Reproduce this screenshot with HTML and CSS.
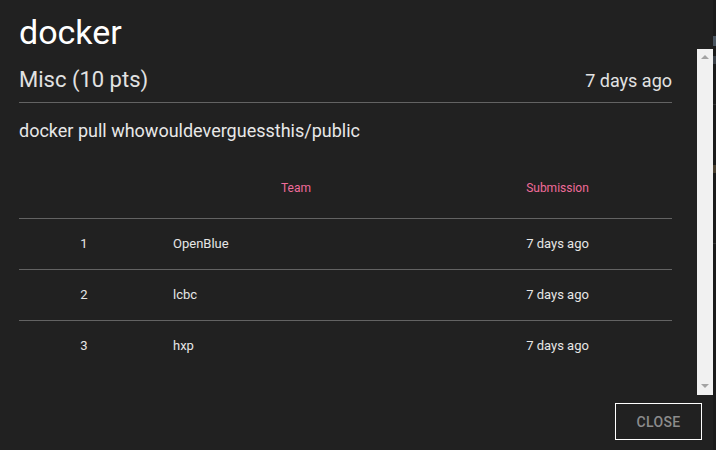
FILE: index.html
```html
<!DOCTYPE html>
<html>
<head>
<meta charset="utf-8">
<link rel="stylesheet" href="styles.css">
</head>
<body>
<div class="screen">
  <div class="dialog">
    <h1 class="title">docker</h1>
    <div class="body">
      <div class="content">
        <div class="meta">
          <span class="category">Misc (10 pts)</span>
          <span class="age">7 days ago</span>
        </div>
        <p class="desc">docker pull whowouldeverguessthis/public</p>
        <table class="solves">
          <colgroup>
            <col class="c-rank"><col class="c-team"><col class="c-sub">
          </colgroup>
          <thead>
            <tr><th></th><th>Team</th><th>Submission</th></tr>
          </thead>
          <tbody>
            <tr><td class="rank">1</td><td class="team">OpenBlue</td><td class="sub">7 days ago</td></tr>
            <tr><td class="rank">2</td><td class="team">lcbc</td><td class="sub">7 days ago</td></tr>
            <tr><td class="rank">3</td><td class="team">hxp</td><td class="sub">7 days ago</td></tr>
          </tbody>
        </table>
      </div>
      <div class="scrollbar">
        <span class="arrow up"></span>
        <span class="arrow down"></span>
      </div>
    </div>
    <div class="actions">
      <button class="close">Close</button>
    </div>
  </div>
  <div class="behind">
    <span class="mark m1"></span>
    <span class="mark m2"></span>
    <span class="mark m3"></span>
    <span class="mark m4"></span>
    <span class="mark m5"></span>
  </div>
</div>
</body>
</html>
```
FILE: styles.css
```css
* { box-sizing: border-box; }
html, body { margin: 0; padding: 0; background: #212121; }
body {
  font-family: Roboto, "Liberation Sans", Arial, sans-serif;
  color: rgba(255,255,255,0.87);
  width: 716px;
  height: 450px;
  overflow: hidden;
}
.screen { display: flex; width: 716px; height: 450px; }
.dialog {
  width: 713px;
  height: 450px;
  background: #212121;
  display: flex;
  flex-direction: column;
}
.title {
  margin: 0;
  padding: 15px 0 0 19px;
  height: 49px;
  font-size: 34px;
  line-height: 34px;
  font-weight: 400;
  color: #ffffff;
}
.body {
  display: flex;
  height: 346px;
}
.content {
  width: 697px;
  padding: 0 25px 0 19px;
}
.meta {
  display: flex;
  justify-content: space-between;
  align-items: baseline;
  padding-top: 18px;
  padding-bottom: 8px;
  font-size: 22px;
  line-height: 26px;
  color: #e2e2e2;
  border-bottom: 1px solid #636363;
}
.age { font-size: 18px; }
.desc {
  margin: 14px 0 0 0;
  font-size: 18px;
  line-height: 27px;
  color: #e8e8e8;
}
.solves {
  margin-top: 14px;
  width: 653px;
  border-collapse: collapse;
  table-layout: fixed;
  font-size: 13px;
}
.c-rank { width: 130px; }
.c-team { width: 294px; }
.c-sub { width: 229px; }
.solves th {
  height: 60px;
  font-size: 12px;
  font-weight: 400;
  color: #f06b9a;
  text-align: center;
  padding: 0;
  border-bottom: 1px solid #636363;
}
.solves td {
  height: 51px;
  padding: 0;
  color: #e6e6e6;
  border-bottom: 1px solid #636363;
}
.solves tbody tr:last-child td { border-bottom: none; }
.rank { text-align: center; }
.team { text-align: left; padding-left: 24px !important; }
.sub { text-align: center; }
.scrollbar {
  width: 16px;
  height: 346px;
  background: #f1f1f1;
  display: flex;
  flex-direction: column;
  justify-content: space-between;
  align-items: center;
  padding: 6px 0 7px 0;
}
.arrow {
  width: 0;
  height: 0;
  border-left: 4px solid transparent;
  border-right: 4px solid transparent;
}
.arrow.up { border-bottom: 4px solid #a3a3a3; }
.arrow.down { border-top: 4px solid #a3a3a3; }
.actions {
  height: 55px;
  display: flex;
  justify-content: flex-end;
  align-items: flex-start;
  padding: 8px 11px 0 0;
}
.close {
  width: 87px;
  height: 37px;
  background: transparent;
  border: 1px solid #ffffff;
  border-radius: 0;
  color: #8c8c8c;
  font-family: Roboto, "Liberation Sans", Arial, sans-serif;
  font-size: 14px;
  font-weight: 500;
  text-transform: uppercase;
  letter-spacing: 0.3px;
  padding: 0;
}
.behind {
  width: 3px;
  height: 450px;
  background: #1b1b1b;
  display: flex;
  flex-direction: column;
}
.mark { display: block; width: 3px; }
.m1 { height: 10px; margin-top: 36px; background: #4a5560; }
.m2 { height: 8px; margin-top: 10px; background: #3a4048; }
.m3 { height: 1px; margin-top: 40px; background: #333; }
.m4 { height: 8px; margin-top: 60px; background: #4a4030; }
.m5 { height: 1px; margin-top: 70px; background: #333; }
```
